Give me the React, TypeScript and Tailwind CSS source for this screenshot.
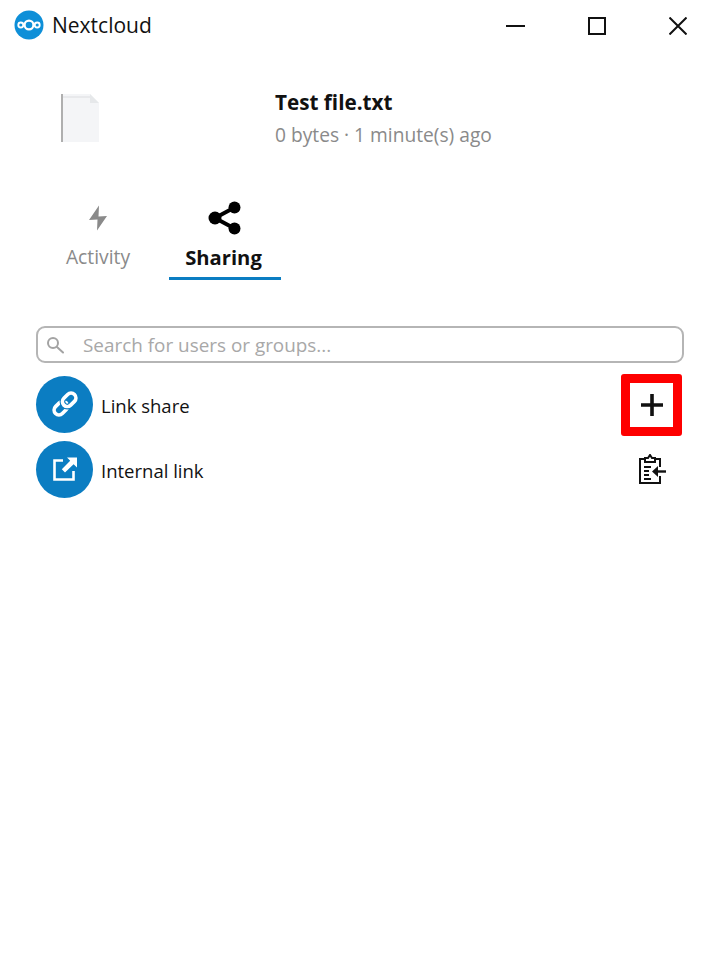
import React from 'react';

const FONT = "font-['Open_Sans','Noto_Sans',sans-serif]";

const NextcloudLogo = () => (
  <svg viewBox="0 0 30 30" className="w-[30px] h-[30px] shrink-0">
    <circle cx="15" cy="15" r="14.5" fill="#0e8fd8" />
    <circle cx="15" cy="15" r="4.4" fill="none" stroke="#fff" strokeWidth="2.2" />
    <circle cx="6.8" cy="15" r="2.5" fill="none" stroke="#fff" strokeWidth="1.9" />
    <circle cx="23.2" cy="15" r="2.5" fill="none" stroke="#fff" strokeWidth="1.9" />
  </svg>
);

const FileIcon = () => (
  <svg viewBox="0 0 38 49" className="w-[38px] h-[49px]">
    <path d="M1.5 1H29L38 10V49H1.5Z" fill="#f4f5f7" />
    <path d="M29 1L38 10H29Z" fill="#e6e8ea" />
    <path d="M2 4H29" stroke="#dcdde0" strokeWidth="1" />
    <path d="M1 1V49" stroke="#9c9c9c" strokeWidth="1.6" />
  </svg>
);

const BoltIcon = () => (
  <svg viewBox="0 0 20 26" className="w-[20px] h-[26px]">
    <path d="M11 0.5L1 15L9.5 14.5L9 25.5L19 11L10.5 11.5Z" fill="#8a8a8a" />
  </svg>
);

const ShareIcon = () => (
  <svg viewBox="0 0 34 34" className="w-[34px] h-[34px]">
    <g fill="#000">
      <circle cx="26.5" cy="6.5" r="6" />
      <circle cx="7" cy="17" r="6.5" />
      <circle cx="26.5" cy="27.5" r="6" />
    </g>
    <path d="M26.5 6.5L7 17L26.5 27.5" fill="none" stroke="#000" strokeWidth="4" />
  </svg>
);

const SearchIcon = () => (
  <svg viewBox="0 0 18 18" className="w-[18px] h-[18px] shrink-0" fill="none" stroke="#a3a3a3" strokeWidth="2">
    <circle cx="7" cy="7" r="5" />
    <path d="M11 11L17 16.5" strokeLinecap="round" />
  </svg>
);

const LinkIcon = () => (
  <svg viewBox="0 0 28 28" className="w-[30px] h-[30px]" fill="none">
    <g transform="rotate(-45 14 14)">
      <rect x="1.5" y="9.5" width="14" height="9" rx="4.5" stroke="#fff" strokeWidth="3.4" />
      <rect x="12.5" y="9.5" width="14" height="9" rx="4.5" stroke="#0b7dc2" strokeWidth="5.4" />
      <rect x="12.5" y="9.5" width="14" height="9" rx="4.5" stroke="#fff" strokeWidth="3.4" />
    </g>
  </svg>
);

const ExternalIcon = () => (
  <svg viewBox="0 0 26 26" className="w-[26px] h-[26px]" fill="none">
    <path d="M11 4.5H2.5V23.5H21.5V15" stroke="#fff" strokeWidth="2.6" />
    <path d="M15 1.5H25V11.5L21.6 8.2L13 16.5L9.8 13.2L18.2 4.8Z" fill="#fff" />
  </svg>
);

const PlusIcon = () => (
  <svg viewBox="0 0 22 22" className="w-[22px] h-[22px]">
    <path d="M11 0V22M0 11H22" stroke="#111" strokeWidth="3.6" />
  </svg>
);

const ClipboardIcon = () => (
  <svg viewBox="0 0 28 30" className="w-[28px] h-[30px]" fill="none" stroke="#111" strokeWidth="2">
    <path d="M7 5H2V29H22V22M22 13V5H17" />
    <path d="M7 8V4H10L12 1L14 4H17V8Z" fill="#fff" />
    <path d="M6 13H13M6 17H11M6 21H11M6 25H13" strokeWidth="1.8" />
    <path d="M28 17.5H16" strokeWidth="2.4" />
    <path d="M20 12L14 17.5L20 23Z" fill="#111" stroke="none" />
  </svg>
);

const App: React.FC = () => {
  return (
    <div className={`w-[720px] h-[954px] bg-white overflow-hidden flex flex-col ${FONT}`}>
      {/* Title bar */}
      <div className="h-[50px] flex items-center pl-[14px]">
        <NextcloudLogo />
        <span className="ml-[8px] mt-[2px] text-[21px] text-[#111]">Nextcloud</span>
        <div className="ml-auto mt-[1px] flex items-center pr-[33px] gap-[63px]">
          <div className="w-[19px] h-[2px] bg-[#111] -ml-[1px]" />
          <div className="w-[18px] h-[18px] border-2 border-[#111]" />
          <svg viewBox="0 0 18 18" className="w-[18px] h-[18px]">
            <path d="M0.5 0.5L17.5 17.5M17.5 0.5L0.5 17.5" stroke="#111" strokeWidth="2" />
          </svg>
        </div>
      </div>

      {/* File info */}
      <div className="mt-[43px] flex items-start pl-[61px]">
        <FileIcon />
        <div className="ml-[176px] flex flex-col -mt-[4px]">
          <span className="text-[20.7px] leading-[27px] font-bold text-[#111]">Test file.txt</span>
          <span className="mt-[5px] text-[19.2px] leading-[27px] text-[#8a8a8a]">0 bytes · 1 minute(s) ago</span>
        </div>
      </div>

      {/* Tabs */}
      <div className="mt-[49px] flex pl-[42px] gap-[15px]">
        <div className="w-[112px] h-[83px] flex flex-col items-center">
          <div className="h-[34px] mt-[4px] flex items-center"><BoltIcon /></div>
          <span className="mt-[9px] text-[19.3px] leading-[26px] text-[#8a8a8a]">Activity</span>
        </div>
        <div className="w-[112px] h-[83px] flex flex-col items-center border-b-[3px] border-[#0b7dc2]">
          <div className="h-[34px] mt-[4px] flex items-center"><ShareIcon /></div>
          <span className="mt-[9px] mr-[3px] text-[20.2px] leading-[26px] font-bold text-[#111]">Sharing</span>
        </div>
      </div>

      {/* Search */}
      <div className="mt-[46px] mx-[36px] h-[37px] border-2 border-[#b5b5b5] rounded-[9px] flex items-center pl-[8px]">
        <SearchIcon />
        <span className="ml-[19px] mt-[2px] text-[18.9px] text-[#a8a8a8]">Search for users or groups...</span>
      </div>

      {/* Share rows */}
      <div className="mt-[11px] ml-[36px] mr-[38px] flex items-center h-[62px]">
        <div className="w-[57px] h-[57px] mb-[2px] rounded-full bg-[#0b7dc2] flex items-center justify-center">
          <LinkIcon />
        </div>
        <span className="ml-[8px] mt-[2px] text-[18.5px] text-[#111]">Link share</span>
        <div className="ml-auto w-[61px] h-[62px] border-[9px] border-[#fe0000] rounded-[3px] flex items-center justify-center">
          <PlusIcon />
        </div>
      </div>
      <div className="mt-[3px] ml-[36px] mr-[38px] flex items-center h-[60px]">
        <div className="w-[57px] h-[57px] rounded-full bg-[#0b7dc2] flex items-center justify-center">
          <ExternalIcon />
        </div>
        <span className="ml-[8px] mt-[4px] text-[18.5px] text-[#111]">Internal link</span>
        <div className="ml-auto w-[61px] flex justify-center">
          <ClipboardIcon />
        </div>
      </div>
    </div>
  );
};

export default App;
